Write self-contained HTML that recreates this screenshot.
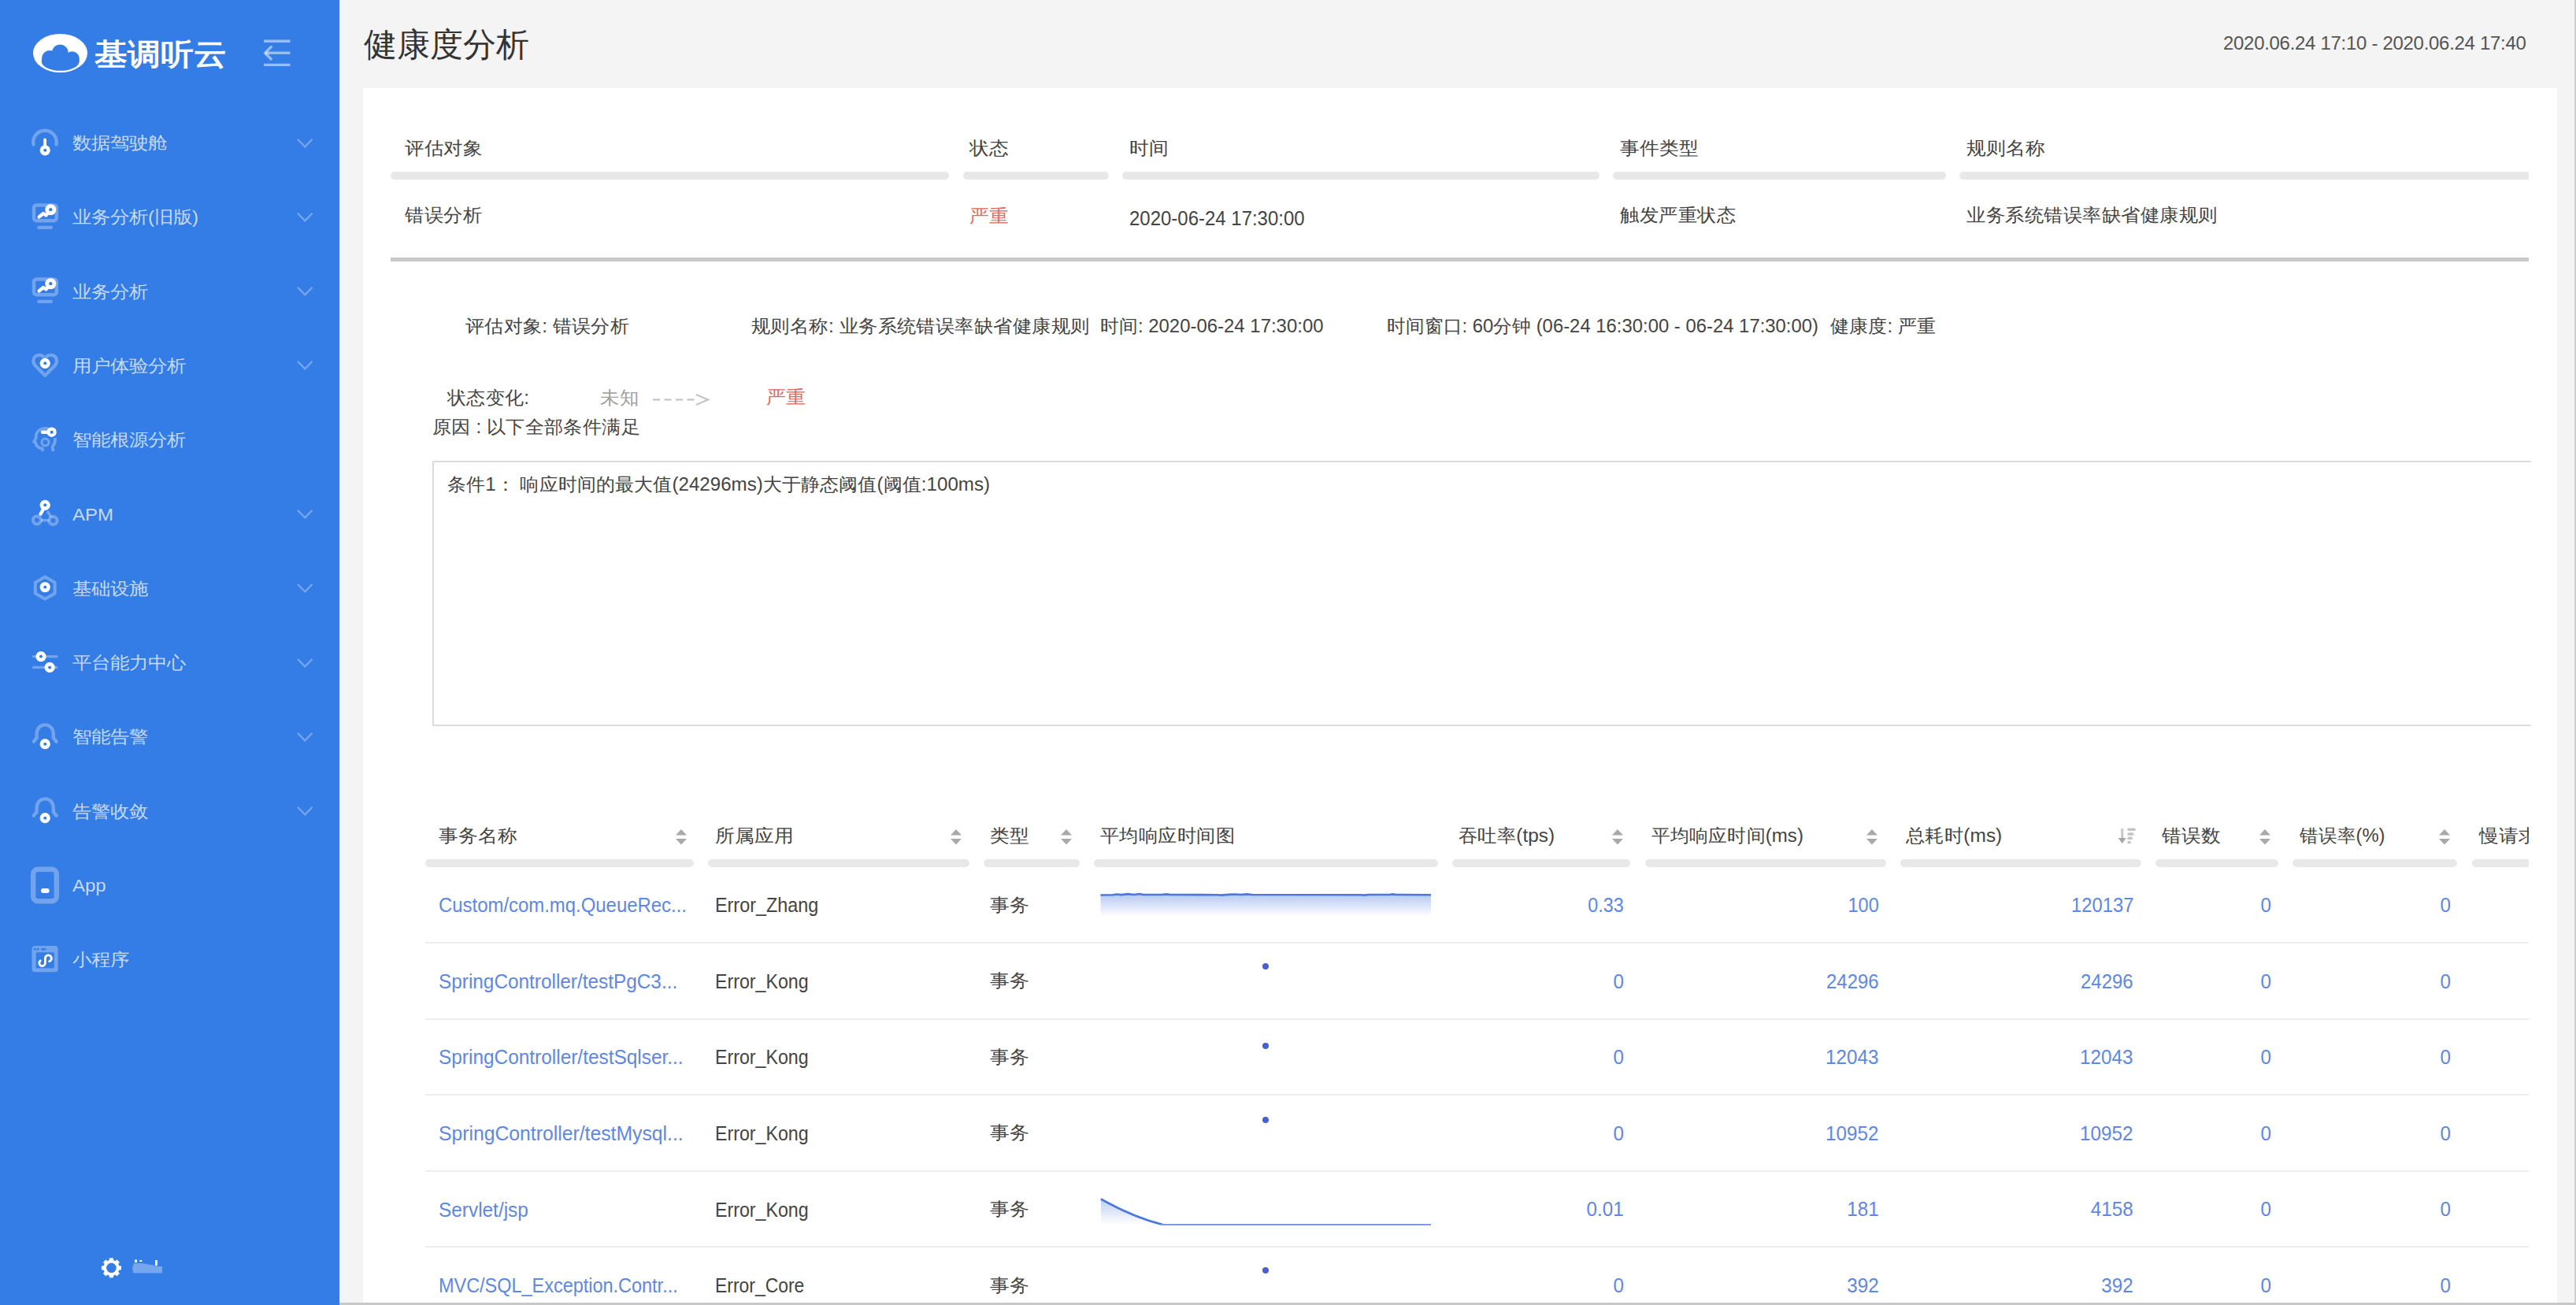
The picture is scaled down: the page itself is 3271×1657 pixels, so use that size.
<!DOCTYPE html><html><head><meta charset="utf-8"><style>
html,body{margin:0;padding:0}
body{width:3271px;height:1657px;overflow:hidden;position:relative;background:#f4f4f4;font-family:"Liberation Sans",sans-serif}
.t{position:absolute;line-height:1;white-space:nowrap}
.sbt{font-size:24px;color:rgba(255,255,255,0.72);transform:scaleY(0.9);transform-origin:0 50%}
</style></head><body>
<div id="sb" style="position:absolute;left:0;top:0;width:431px;height:1657px;background:#347ce6"></div>
<svg style="position:absolute;left:0;top:0" width="431" height="120" viewBox="0 0 431 120">
<ellipse cx="76.5" cy="67.5" rx="34.5" ry="24.5" fill="#fff"/>
<g fill="#347ce6">
<circle cx="76.3" cy="66.8" r="10.4"/>
<circle cx="63" cy="74" r="10"/>
<circle cx="91.5" cy="74.5" r="9.3"/>
<ellipse cx="76.7" cy="78" rx="24" ry="11.8"/>
</g>
<g stroke="rgba(255,255,255,0.5)" stroke-width="3.4" fill="none" stroke-linecap="butt">
<line x1="335" y1="52.2" x2="368.5" y2="52.2"/>
<line x1="337" y1="67.2" x2="368.5" y2="67.2"/>
<line x1="335" y1="82.4" x2="368.5" y2="82.4"/>
<polyline points="344.2,59.6 336.5,67.2 344.2,75" stroke-linecap="round" stroke-linejoin="round"/>
</g>
</svg>
<div class="t" style="left:120px;top:50px;font-size:42px;font-weight:bold;color:#fff;transform:scaleY(0.91);transform-origin:0 0">基调听云</div>
<div class="t sbt" style="left:92px;top:170.0px">数据驾驶舱</div>
<svg style="position:absolute;left:370px;top:169.5px" width="34" height="24"><polyline points="7.9,6.8 17.3,16.4 26.5,6.8" fill="none" stroke="rgba(255,255,255,0.32)" stroke-width="2.3"/></svg>
<div class="t sbt" style="left:92px;top:264.3px">业务分析(旧版)</div>
<svg style="position:absolute;left:370px;top:263.8px" width="34" height="24"><polyline points="7.9,6.8 17.3,16.4 26.5,6.8" fill="none" stroke="rgba(255,255,255,0.32)" stroke-width="2.3"/></svg>
<div class="t sbt" style="left:92px;top:358.6px">业务分析</div>
<svg style="position:absolute;left:370px;top:358.1px" width="34" height="24"><polyline points="7.9,6.8 17.3,16.4 26.5,6.8" fill="none" stroke="rgba(255,255,255,0.32)" stroke-width="2.3"/></svg>
<div class="t sbt" style="left:92px;top:452.9px">用户体验分析</div>
<svg style="position:absolute;left:370px;top:452.4px" width="34" height="24"><polyline points="7.9,6.8 17.3,16.4 26.5,6.8" fill="none" stroke="rgba(255,255,255,0.32)" stroke-width="2.3"/></svg>
<div class="t sbt" style="left:92px;top:547.2px">智能根源分析</div>
<div class="t sbt" style="left:92px;top:641.5px">APM</div>
<svg style="position:absolute;left:370px;top:641.0px" width="34" height="24"><polyline points="7.9,6.8 17.3,16.4 26.5,6.8" fill="none" stroke="rgba(255,255,255,0.32)" stroke-width="2.3"/></svg>
<div class="t sbt" style="left:92px;top:735.8px">基础设施</div>
<svg style="position:absolute;left:370px;top:735.3px" width="34" height="24"><polyline points="7.9,6.8 17.3,16.4 26.5,6.8" fill="none" stroke="rgba(255,255,255,0.32)" stroke-width="2.3"/></svg>
<div class="t sbt" style="left:92px;top:830.1px">平台能力中心</div>
<svg style="position:absolute;left:370px;top:829.6px" width="34" height="24"><polyline points="7.9,6.8 17.3,16.4 26.5,6.8" fill="none" stroke="rgba(255,255,255,0.32)" stroke-width="2.3"/></svg>
<div class="t sbt" style="left:92px;top:924.4px">智能告警</div>
<svg style="position:absolute;left:370px;top:923.9px" width="34" height="24"><polyline points="7.9,6.8 17.3,16.4 26.5,6.8" fill="none" stroke="rgba(255,255,255,0.32)" stroke-width="2.3"/></svg>
<div class="t sbt" style="left:92px;top:1018.7px">告警收敛</div>
<svg style="position:absolute;left:370px;top:1018.2px" width="34" height="24"><polyline points="7.9,6.8 17.3,16.4 26.5,6.8" fill="none" stroke="rgba(255,255,255,0.32)" stroke-width="2.3"/></svg>
<div class="t sbt" style="left:92px;top:1113.0px">App</div>
<div class="t sbt" style="left:92px;top:1207.3px">小程序</div>
<svg style="position:absolute;left:30px;top:156.5px" width="60" height="50" viewBox="0 0 60 50"><path d="M12.5,26.5 A14.8,14.8 0 1 1 41.5,26.5" fill="none" stroke="rgba(255,255,255,0.31)" stroke-width="4.3" stroke-linecap="round"/><rect x="25.2" y="18.5" width="3.8" height="12" rx="1.9" fill="#fff"/><circle cx="27.2" cy="33.8" r="6.6" fill="#fff"/><circle cx="27.2" cy="33.8" r="2.0" fill="#347ce6"/></svg>
<svg style="position:absolute;left:30px;top:250.8px" width="60" height="50" viewBox="0 0 60 50"><rect x="13" y="9.4" width="28.8" height="19.8" rx="3.5" fill="none" stroke="rgba(255,255,255,0.31)" stroke-width="4.5"/><rect x="17.2" y="35.7" width="19.8" height="4.3" rx="2.1" fill="rgba(255,255,255,0.31)"/><polyline points="19.5,24.5 25,20 28.5,22.5 33,17" fill="none" stroke="#fff" stroke-width="4.2" stroke-linecap="round" stroke-linejoin="round"/><circle cx="34.3" cy="15.2" r="7" fill="#fff"/><circle cx="34.3" cy="15.2" r="2.1" fill="#347ce6"/></svg>
<svg style="position:absolute;left:30px;top:345.1px" width="60" height="50" viewBox="0 0 60 50"><rect x="13" y="9.4" width="28.8" height="19.8" rx="3.5" fill="none" stroke="rgba(255,255,255,0.31)" stroke-width="4.5"/><rect x="17.2" y="35.7" width="19.8" height="4.3" rx="2.1" fill="rgba(255,255,255,0.31)"/><polyline points="19.5,24.5 25,20 28.5,22.5 33,17" fill="none" stroke="#fff" stroke-width="4.2" stroke-linecap="round" stroke-linejoin="round"/><circle cx="34.3" cy="15.2" r="7" fill="#fff"/><circle cx="34.3" cy="15.2" r="2.1" fill="#347ce6"/></svg>
<svg style="position:absolute;left:30px;top:439.4px" width="60" height="50" viewBox="0 0 60 50"><path d="M27.2,37.8 L15.5,26 C9.5,19.5 13,11.8 19.8,11.8 C23.5,11.8 25.8,14 27.2,16.2 C28.6,14 30.9,11.8 34.6,11.8 C41.4,11.8 44.9,19.5 38.9,26 Z" fill="none" stroke="rgba(255,255,255,0.31)" stroke-width="4.3" stroke-linejoin="round"/><circle cx="27.2" cy="22.3" r="6.6" fill="#fff"/><circle cx="27.2" cy="22.3" r="2.0" fill="#347ce6"/></svg>
<svg style="position:absolute;left:30px;top:533.7px" width="60" height="50" viewBox="0 0 60 50"><path d="M24,39 L24,35.5 C17,34.5 15.5,31 15.5,28 L13,27 L15.5,22.5 C15.5,14 21,9.8 28,9.8 C33,9.8 37,12 39.5,15.5 M39.8,22 C40.5,27 38.5,31 36.5,33 L37.5,39" fill="none" stroke="rgba(255,255,255,0.31)" stroke-width="3.8" stroke-linejoin="round"/><circle cx="27.5" cy="27.5" r="4.5" fill="none" stroke="rgba(255,255,255,0.31)" stroke-width="3.2"/><line x1="24" y1="14.7" x2="34" y2="14.7" stroke="#fff" stroke-width="4.4" stroke-linecap="round"/><circle cx="35.6" cy="14.7" r="6.2" fill="#fff"/><circle cx="35.6" cy="14.7" r="2.0" fill="#347ce6"/></svg>
<svg style="position:absolute;left:30px;top:628.0px" width="60" height="50" viewBox="0 0 60 50"><circle cx="16.9" cy="32.5" r="5" fill="none" stroke="rgba(255,255,255,0.31)" stroke-width="4"/><circle cx="37.5" cy="33" r="5" fill="none" stroke="rgba(255,255,255,0.31)" stroke-width="4"/><line x1="22" y1="32.7" x2="32.5" y2="32.8" stroke="rgba(255,255,255,0.31)" stroke-width="3.5"/><line x1="30" y1="21" x2="35" y2="28.5" stroke="rgba(255,255,255,0.31)" stroke-width="3.5"/><line x1="27" y1="15" x2="21.6" y2="24.5" stroke="#fff" stroke-width="4.4" stroke-linecap="round"/><circle cx="27.2" cy="13.3" r="6.6" fill="#fff"/><circle cx="27.2" cy="13.3" r="2.0" fill="#347ce6"/></svg>
<svg style="position:absolute;left:30px;top:722.3px" width="60" height="50" viewBox="0 0 60 50"><polygon points="27.2,10.5 39.6,17.5 39.6,31.5 27.2,38.5 14.8,31.5 14.8,17.5" fill="none" stroke="rgba(255,255,255,0.31)" stroke-width="4" stroke-linejoin="round"/><circle cx="27.2" cy="23.5" r="6.6" fill="#fff"/><circle cx="27.2" cy="23.5" r="2.0" fill="#347ce6"/></svg>
<svg style="position:absolute;left:30px;top:816.6px" width="60" height="50" viewBox="0 0 60 50"><line x1="12.5" y1="16.6" x2="42" y2="16.6" stroke="rgba(255,255,255,0.31)" stroke-width="3.4" stroke-linecap="round"/><line x1="12.5" y1="30.4" x2="42" y2="30.4" stroke="rgba(255,255,255,0.31)" stroke-width="3.4" stroke-linecap="round"/><circle cx="22" cy="16.6" r="6.6" fill="#fff"/><circle cx="22" cy="16.6" r="2.0" fill="#347ce6"/><circle cx="33.1" cy="30.4" r="6.6" fill="#fff"/><circle cx="33.1" cy="30.4" r="2.0" fill="#347ce6"/></svg>
<svg style="position:absolute;left:30px;top:910.9px" width="60" height="50" viewBox="0 0 60 50"><path d="M12.8,30.6 L16.6,25.8 L16.6,21 C16.6,13.6 21.4,9.4 27.2,9.4 C33,9.4 37.8,13.6 37.8,21 L37.8,25.8 L41.6,30.6" fill="none" stroke="rgba(255,255,255,0.31)" stroke-width="4.4" stroke-linecap="round" stroke-linejoin="round"/><circle cx="27.2" cy="33.7" r="6.6" fill="#fff"/><circle cx="27.2" cy="33.7" r="2.0" fill="#347ce6"/></svg>
<svg style="position:absolute;left:30px;top:1005.2px" width="60" height="50" viewBox="0 0 60 50"><path d="M12.8,30.6 L16.6,25.8 L16.6,21 C16.6,13.6 21.4,9.4 27.2,9.4 C33,9.4 37.8,13.6 37.8,21 L37.8,25.8 L41.6,30.6" fill="none" stroke="rgba(255,255,255,0.31)" stroke-width="4.4" stroke-linecap="round" stroke-linejoin="round"/><circle cx="27.2" cy="33.7" r="6.6" fill="#fff"/><circle cx="27.2" cy="33.7" r="2.0" fill="#347ce6"/></svg>
<svg style="position:absolute;left:30px;top:1099.5px" width="60" height="50" viewBox="0 0 60 50"><rect x="12.15" y="3.75" width="29.7" height="40.4" rx="6" fill="none" stroke="rgba(255,255,255,0.31)" stroke-width="6.5"/><rect x="22" y="27.9" width="10.7" height="6" rx="3" fill="#fff"/></svg>
<svg style="position:absolute;left:30px;top:1193.8px" width="60" height="50" viewBox="0 0 60 50"><rect x="10.5" y="6.9" width="33.1" height="33.3" rx="4" fill="rgba(255,255,255,0.31)"/><rect x="15.7" y="15.3" width="23.1" height="20" fill="#347ce6"/><circle cx="14.4" cy="11.2" r="1.4" fill="#347ce6"/><circle cx="18.1" cy="11.2" r="1.4" fill="#347ce6"/><rect x="22.2" y="10" width="6.2" height="2.4" rx="1.2" fill="#347ce6"/><path d="M32.6,26.6 A4,4 0 1 0 27.4,23.3 L27.4,28.8 A3.8,3.8 0 1 1 21.2,25.8" fill="none" stroke="#fff" stroke-width="2.8" stroke-linecap="round"/></svg>
<svg style="position:absolute;left:0;top:0;overflow:visible" width="431" height="1657"><polygon points="139.03,1600.39 139.26,1597.79 143.54,1597.79 143.77,1600.39 146.45,1601.50 148.45,1599.82 151.48,1602.85 149.80,1604.85 150.91,1607.53 153.51,1607.76 153.51,1612.04 150.91,1612.27 149.80,1614.95 151.48,1616.95 148.45,1619.98 146.45,1618.30 143.77,1619.41 143.54,1622.01 139.26,1622.01 139.03,1619.41 136.35,1618.30 134.35,1619.98 131.32,1616.95 133.00,1614.95 131.89,1612.27 129.29,1612.04 129.29,1607.76 131.89,1607.53 133.00,1604.85 131.32,1602.85 134.35,1599.82 136.35,1601.50" fill="#fff" stroke="#fff" stroke-width="0.8" stroke-linejoin="round"/><circle cx="141.4" cy="1609.9" r="6.3" fill="#347ce6"/><polygon points="168,1610 170,1604 180,1604 192,1606 200,1608 206,1608 206,1616.5 169,1616.5" fill="rgba(255,255,255,0.32)"/><rect x="171" y="1599.5" width="3" height="3.5" fill="#fff"/><rect x="177" y="1600" width="3.5" height="2" rx="1" fill="#fff"/><rect x="197" y="1600" width="2.8" height="7" fill="#fff"/></svg>
<div style="position:absolute;left:461px;top:112px;width:2786px;height:1545px;background:#fff"></div>
<div class="t" style="left:462px;top:36px;font-size:42px;color:#333;">健康度分析</div>
<div class="t" style="left:2823px;top:43px;font-size:24px;color:#555;letter-spacing:-0.3px">2020.06.24 17:10 - 2020.06.24 17:40</div>
<div class="t" style="left:514px;top:176px;font-size:25px;color:#444;transform:scale(0.9879,0.93);transform-origin:0 50%;">评估对象</div>
<div class="t" style="left:1231px;top:176px;font-size:25px;color:#444;transform:scale(1.0,0.93);transform-origin:0 50%;">状态</div>
<div class="t" style="left:1434px;top:176px;font-size:25px;color:#444;transform:scale(1.0,0.93);transform-origin:0 50%;">时间</div>
<div class="t" style="left:2057px;top:176px;font-size:25px;color:#444;transform:scale(1.0,0.93);transform-origin:0 50%;">事件类型</div>
<div class="t" style="left:2497px;top:176px;font-size:25px;color:#444;transform:scale(1.0,0.93);transform-origin:0 50%;">规则名称</div>
<div style="position:absolute;left:496px;top:217.5px;width:709px;height:10.5px;background:#e8e8e8;border-radius:5.25px"></div>
<div style="position:absolute;left:1223px;top:217.5px;width:185px;height:10.5px;background:#e8e8e8;border-radius:5.25px"></div>
<div style="position:absolute;left:1425px;top:217.5px;width:606px;height:10.5px;background:#e8e8e8;border-radius:5.25px"></div>
<div style="position:absolute;left:2048px;top:217.5px;width:423px;height:10.5px;background:#e8e8e8;border-radius:5.25px"></div>
<div style="position:absolute;left:2488px;top:217.5px;width:723px;height:10.5px;background:#e8e8e8;border-radius:5px 0 0 5px"></div>
<div class="t" style="left:514px;top:261px;font-size:25px;color:#444;transform:scale(0.9818,0.93);transform-origin:0 50%;">错误分析</div>
<div class="t" style="left:1231px;top:262px;font-size:25px;color:#e06a5e;transform:scale(1.0,0.93);transform-origin:0 50%;">严重</div>
<div class="t" style="left:1434px;top:264px;font-size:26px;color:#444;transform:scale(0.9221,1.0);transform-origin:0 50%;">2020-06-24 17:30:00</div>
<div class="t" style="left:2057px;top:261px;font-size:25px;color:#444;transform:scale(0.9819,0.93);transform-origin:0 50%;">触发严重状态</div>
<div class="t" style="left:2497px;top:261px;font-size:25px;color:#444;transform:scale(0.9815,0.93);transform-origin:0 50%;">业务系统错误率缺省健康规则</div>
<div style="position:absolute;left:496px;top:326.5px;width:2715px;height:5px;background:#c8c8c8"></div>
<div class="t" style="left:591px;top:402px;font-size:25px;color:#444;transform:scale(0.9718,0.93);transform-origin:0 50%;">评估对象: 错误分析</div>
<div class="t" style="left:954px;top:402px;font-size:25px;color:#444;transform:scale(0.9794,0.93);transform-origin:0 50%;">规则名称: 业务系统错误率缺省健康规则</div>
<div class="t" style="left:1397px;top:402px;font-size:25px;color:#444;transform:scale(0.9578,0.93);transform-origin:0 50%;">时间: 2020-06-24 17:30:00</div>
<div class="t" style="left:1761px;top:402px;font-size:25px;color:#444;transform:scale(0.9548,0.93);transform-origin:0 50%;">时间窗口: 60分钟 (06-24 16:30:00 - 06-24 17:30:00)</div>
<div class="t" style="left:2324px;top:402px;font-size:25px;color:#444;transform:scale(0.968,0.93);transform-origin:0 50%;">健康度: 严重</div>
<div class="t" style="left:568px;top:492.5px;font-size:25px;color:#444;transform:scale(0.9721,0.93);transform-origin:0 50%;">状态变化:</div>
<div class="t" style="left:762px;top:492.5px;font-size:25px;color:#a0a0a0;transform:scale(0.9837,0.93);transform-origin:0 50%;">未知</div>
<svg style="position:absolute;left:826px;top:498px" width="80" height="20"><g stroke="#c4c4c4" stroke-width="2.2" fill="none"><line x1="3" y1="9.5" x2="12" y2="9.5"/><line x1="17.5" y1="9.5" x2="26.5" y2="9.5"/><line x1="32" y1="9.5" x2="41" y2="9.5"/><line x1="46.5" y1="9.5" x2="55.5" y2="9.5"/><polyline points="58,3 73,9.5 58,16"/></g></svg>
<div class="t" style="left:973px;top:492px;font-size:25px;color:#e06a5e;transform:scale(1.0082,0.93);transform-origin:0 50%;">严重</div>
<div class="t" style="left:549px;top:530px;font-size:25px;color:#444;transform:scale(0.9743,0.93);transform-origin:0 50%;">原因 : 以下全部条件满足</div>
<div style="position:absolute;left:549px;top:585px;width:2663px;height:333px;border:2px solid #dcdcdc;border-right:none"></div>
<div class="t" style="left:568px;top:603px;font-size:25px;color:#444;transform:scale(0.965,0.93);transform-origin:0 50%;">条件1： 响应时间的最大值(24296ms)大于静态阈值(阈值:100ms)</div>
<div style="position:absolute;left:0;top:0;width:3211px;height:1657px;overflow:hidden">
<div class="t" style="left:557px;top:1049px;font-size:25px;color:#444;transform:scale(1,0.93);transform-origin:0 50%;">事务名称</div>
<div class="t" style="left:908px;top:1049px;font-size:25px;color:#444;transform:scale(1,0.93);transform-origin:0 50%;">所属应用</div>
<div class="t" style="left:1257px;top:1049px;font-size:25px;color:#444;transform:scale(1,0.93);transform-origin:0 50%;">类型</div>
<div class="t" style="left:1397px;top:1049px;font-size:25px;color:#444;transform:scale(0.9787,0.93);transform-origin:0 50%;">平均响应时间图</div>
<div class="t" style="left:1852px;top:1049px;font-size:25px;color:#444;transform:scale(0.9774,0.93);transform-origin:0 50%;">吞吐率(tps)</div>
<div class="t" style="left:2097px;top:1049px;font-size:25px;color:#444;transform:scale(0.9649,0.93);transform-origin:0 50%;">平均响应时间(ms)</div>
<div class="t" style="left:2420px;top:1049px;font-size:25px;color:#444;transform:scale(0.9783,0.93);transform-origin:0 50%;">总耗时(ms)</div>
<div class="t" style="left:2745px;top:1049px;font-size:25px;color:#444;transform:scale(0.9973,0.93);transform-origin:0 50%;">错误数</div>
<div class="t" style="left:2920px;top:1049px;font-size:25px;color:#444;transform:scale(0.9531,0.93);transform-origin:0 50%;">错误率(%)</div>
<div class="t" style="left:3148px;top:1049px;font-size:25px;color:#444;transform:scale(1,0.93);transform-origin:0 50%;">慢请求</div>
<div style="position:absolute;left:540px;top:1091px;width:341px;height:10px;background:#e8e8e8;border-radius:5.0px"></div>
<div style="position:absolute;left:899px;top:1091px;width:332px;height:10px;background:#e8e8e8;border-radius:5.0px"></div>
<div style="position:absolute;left:1249px;top:1091px;width:122px;height:10px;background:#e8e8e8;border-radius:5.0px"></div>
<div style="position:absolute;left:1389px;top:1091px;width:437px;height:10px;background:#e8e8e8;border-radius:5.0px"></div>
<div style="position:absolute;left:1844px;top:1091px;width:226px;height:10px;background:#e8e8e8;border-radius:5.0px"></div>
<div style="position:absolute;left:2089px;top:1091px;width:306px;height:10px;background:#e8e8e8;border-radius:5.0px"></div>
<div style="position:absolute;left:2413px;top:1091px;width:306px;height:10px;background:#e8e8e8;border-radius:5.0px"></div>
<div style="position:absolute;left:2737px;top:1091px;width:156px;height:10px;background:#e8e8e8;border-radius:5.0px"></div>
<div style="position:absolute;left:2911px;top:1091px;width:209px;height:10px;background:#e8e8e8;border-radius:5.0px"></div>
<div style="position:absolute;left:3139px;top:1091px;width:100px;height:10px;background:#e8e8e8;border-radius:5px"></div>
</div>
<svg style="position:absolute;left:856.5px;top:1052px" width="16" height="22"><polygon points="8,1 15,8.5 1,8.5" fill="#a9a9a9"/><polygon points="1,13 15,13 8,20.5" fill="#a9a9a9"/></svg>
<svg style="position:absolute;left:1206px;top:1052px" width="16" height="22"><polygon points="8,1 15,8.5 1,8.5" fill="#a9a9a9"/><polygon points="1,13 15,13 8,20.5" fill="#a9a9a9"/></svg>
<svg style="position:absolute;left:1346px;top:1052px" width="16" height="22"><polygon points="8,1 15,8.5 1,8.5" fill="#a9a9a9"/><polygon points="1,13 15,13 8,20.5" fill="#a9a9a9"/></svg>
<svg style="position:absolute;left:2045.5px;top:1052px" width="16" height="22"><polygon points="8,1 15,8.5 1,8.5" fill="#a9a9a9"/><polygon points="1,13 15,13 8,20.5" fill="#a9a9a9"/></svg>
<svg style="position:absolute;left:2369px;top:1052px" width="16" height="22"><polygon points="8,1 15,8.5 1,8.5" fill="#a9a9a9"/><polygon points="1,13 15,13 8,20.5" fill="#a9a9a9"/></svg>
<svg style="position:absolute;left:2867.5px;top:1052px" width="16" height="22"><polygon points="8,1 15,8.5 1,8.5" fill="#a9a9a9"/><polygon points="1,13 15,13 8,20.5" fill="#a9a9a9"/></svg>
<svg style="position:absolute;left:3095.5px;top:1052px" width="16" height="22"><polygon points="8,1 15,8.5 1,8.5" fill="#a9a9a9"/><polygon points="1,13 15,13 8,20.5" fill="#a9a9a9"/></svg>
<svg style="position:absolute;left:2680px;top:1045px" width="40" height="35"><line x1="14.75" y1="7" x2="14.75" y2="21" stroke="#c6c6c6" stroke-width="3"/><polygon points="9.8,19 19.7,19 14.75,26" fill="#a6a6a6"/><g fill="#c4c4c4"><rect x="21.3" y="6.6" width="10.5" height="3.4" rx="1.7"/><rect x="21.3" y="12.3" width="8.4" height="3.4" rx="1.7"/><rect x="21.3" y="17.5" width="6.8" height="3.4" rx="1.7"/><rect x="21.3" y="22.8" width="4.6" height="3.4" rx="1.7"/></g></svg>
<div class="t" style="left:557px;top:1136.1px;font-size:26px;color:#5d88e4;transform:scale(0.9196,1.0);transform-origin:0 50%;">Custom/com.mq.QueueRec...</div>
<div class="t" style="left:908px;top:1136.1px;font-size:26px;color:#444;transform:scale(0.8988,1.0);transform-origin:0 50%;">Error_Zhang</div>
<div class="t" style="left:1257px;top:1136.5px;font-size:25px;color:#444;transform:scale(1.0,0.93);transform-origin:0 50%;">事务</div>
<div class="t" style="right:1209px;top:1137.0px;font-size:25px;color:#5d88e4;transform:scaleX(0.9356);transform-origin:100% 0;">0.33</div>
<div class="t" style="right:885px;top:1137.0px;font-size:25px;color:#5d88e4;transform:scaleX(0.9406);transform-origin:100% 0;">100</div>
<div class="t" style="right:562px;top:1137.0px;font-size:25px;color:#5d88e4;transform:scaleX(0.9522);transform-origin:100% 0;">120137</div>
<div class="t" style="right:387px;top:1137.0px;font-size:25px;color:#5d88e4;transform:scaleX(0.97);transform-origin:100% 0;">0</div>
<div class="t" style="right:159px;top:1137.0px;font-size:25px;color:#5d88e4;transform:scaleX(0.97);transform-origin:100% 0;">0</div>
<div style="position:absolute;left:540px;top:1196.0px;width:2671px;height:2px;background:#eeeeee"></div>
<div class="t" style="left:557px;top:1232.7px;font-size:26px;color:#5d88e4;transform:scale(0.9367,1.0);transform-origin:0 50%;">SpringController/testPgC3...</div>
<div class="t" style="left:908px;top:1232.7px;font-size:26px;color:#444;transform:scale(0.8926,1.0);transform-origin:0 50%;">Error_Kong</div>
<div class="t" style="left:1257px;top:1233.1px;font-size:25px;color:#444;transform:scale(1.0,0.93);transform-origin:0 50%;">事务</div>
<div class="t" style="right:1209px;top:1233.6px;font-size:25px;color:#5d88e4;transform:scaleX(0.97);transform-origin:100% 0;">0</div>
<div class="t" style="right:885px;top:1233.6px;font-size:25px;color:#5d88e4;transform:scaleX(0.9558);transform-origin:100% 0;">24296</div>
<div class="t" style="right:562px;top:1233.6px;font-size:25px;color:#5d88e4;transform:scaleX(0.9558);transform-origin:100% 0;">24296</div>
<div class="t" style="right:387px;top:1233.6px;font-size:25px;color:#5d88e4;transform:scaleX(0.97);transform-origin:100% 0;">0</div>
<div class="t" style="right:159px;top:1233.6px;font-size:25px;color:#5d88e4;transform:scaleX(0.97);transform-origin:100% 0;">0</div>
<div style="position:absolute;left:540px;top:1292.6px;width:2671px;height:2px;background:#eeeeee"></div>
<div style="position:absolute;left:1603px;top:1222.5px;width:8px;height:8px;border-radius:4px;background:#4a5fd0"></div>
<div class="t" style="left:557px;top:1329.3px;font-size:26px;color:#5d88e4;transform:scale(0.9387,1.0);transform-origin:0 50%;">SpringController/testSqlser...</div>
<div class="t" style="left:908px;top:1329.3px;font-size:26px;color:#444;transform:scale(0.8926,1.0);transform-origin:0 50%;">Error_Kong</div>
<div class="t" style="left:1257px;top:1329.7px;font-size:25px;color:#444;transform:scale(1.0,0.93);transform-origin:0 50%;">事务</div>
<div class="t" style="right:1209px;top:1330.2px;font-size:25px;color:#5d88e4;transform:scaleX(0.97);transform-origin:100% 0;">0</div>
<div class="t" style="right:885px;top:1330.2px;font-size:25px;color:#5d88e4;transform:scaleX(0.97);transform-origin:100% 0;">12043</div>
<div class="t" style="right:562px;top:1330.2px;font-size:25px;color:#5d88e4;transform:scaleX(0.97);transform-origin:100% 0;">12043</div>
<div class="t" style="right:387px;top:1330.2px;font-size:25px;color:#5d88e4;transform:scaleX(0.97);transform-origin:100% 0;">0</div>
<div class="t" style="right:159px;top:1330.2px;font-size:25px;color:#5d88e4;transform:scaleX(0.97);transform-origin:100% 0;">0</div>
<div style="position:absolute;left:540px;top:1389.2px;width:2671px;height:2px;background:#eeeeee"></div>
<div style="position:absolute;left:1603px;top:1323.7px;width:8px;height:8px;border-radius:4px;background:#4a5fd0"></div>
<div class="t" style="left:557px;top:1425.9px;font-size:26px;color:#5d88e4;transform:scale(0.9513,1.0);transform-origin:0 50%;">SpringController/testMysql...</div>
<div class="t" style="left:908px;top:1425.9px;font-size:26px;color:#444;transform:scale(0.8926,1.0);transform-origin:0 50%;">Error_Kong</div>
<div class="t" style="left:1257px;top:1426.3px;font-size:25px;color:#444;transform:scale(1.0,0.93);transform-origin:0 50%;">事务</div>
<div class="t" style="right:1209px;top:1426.8px;font-size:25px;color:#5d88e4;transform:scaleX(0.97);transform-origin:100% 0;">0</div>
<div class="t" style="right:885px;top:1426.8px;font-size:25px;color:#5d88e4;transform:scaleX(0.97);transform-origin:100% 0;">10952</div>
<div class="t" style="right:562px;top:1426.8px;font-size:25px;color:#5d88e4;transform:scaleX(0.97);transform-origin:100% 0;">10952</div>
<div class="t" style="right:387px;top:1426.8px;font-size:25px;color:#5d88e4;transform:scaleX(0.97);transform-origin:100% 0;">0</div>
<div class="t" style="right:159px;top:1426.8px;font-size:25px;color:#5d88e4;transform:scaleX(0.97);transform-origin:100% 0;">0</div>
<div style="position:absolute;left:540px;top:1485.8px;width:2671px;height:2px;background:#eeeeee"></div>
<div style="position:absolute;left:1603px;top:1418.0px;width:8px;height:8px;border-radius:4px;background:#4a5fd0"></div>
<div class="t" style="left:557px;top:1522.5px;font-size:26px;color:#5d88e4;transform:scale(0.9378,1.0);transform-origin:0 50%;">Servlet/jsp</div>
<div class="t" style="left:908px;top:1522.5px;font-size:26px;color:#444;transform:scale(0.8926,1.0);transform-origin:0 50%;">Error_Kong</div>
<div class="t" style="left:1257px;top:1522.9px;font-size:25px;color:#444;transform:scale(1.0,0.93);transform-origin:0 50%;">事务</div>
<div class="t" style="right:1209px;top:1523.4px;font-size:25px;color:#5d88e4;transform:scaleX(0.97);transform-origin:100% 0;">0.01</div>
<div class="t" style="right:885px;top:1523.4px;font-size:25px;color:#5d88e4;transform:scaleX(0.97);transform-origin:100% 0;">181</div>
<div class="t" style="right:562px;top:1523.4px;font-size:25px;color:#5d88e4;transform:scaleX(0.97);transform-origin:100% 0;">4158</div>
<div class="t" style="right:387px;top:1523.4px;font-size:25px;color:#5d88e4;transform:scaleX(0.97);transform-origin:100% 0;">0</div>
<div class="t" style="right:159px;top:1523.4px;font-size:25px;color:#5d88e4;transform:scaleX(0.97);transform-origin:100% 0;">0</div>
<div style="position:absolute;left:540px;top:1582.4px;width:2671px;height:2px;background:#eeeeee"></div>
<div class="t" style="left:557px;top:1619.1px;font-size:26px;color:#5d88e4;transform:scale(0.9019,1.0);transform-origin:0 50%;">MVC/SQL_Exception.Contr...</div>
<div class="t" style="left:908px;top:1619.1px;font-size:26px;color:#444;transform:scale(0.8809,1.0);transform-origin:0 50%;">Error_Core</div>
<div class="t" style="left:1257px;top:1619.5px;font-size:25px;color:#444;transform:scale(1.0,0.93);transform-origin:0 50%;">事务</div>
<div class="t" style="right:1209px;top:1620.0px;font-size:25px;color:#5d88e4;transform:scaleX(0.97);transform-origin:100% 0;">0</div>
<div class="t" style="right:885px;top:1620.0px;font-size:25px;color:#5d88e4;transform:scaleX(0.97);transform-origin:100% 0;">392</div>
<div class="t" style="right:562px;top:1620.0px;font-size:25px;color:#5d88e4;transform:scaleX(0.97);transform-origin:100% 0;">392</div>
<div class="t" style="right:387px;top:1620.0px;font-size:25px;color:#5d88e4;transform:scaleX(0.97);transform-origin:100% 0;">0</div>
<div class="t" style="right:159px;top:1620.0px;font-size:25px;color:#5d88e4;transform:scaleX(0.97);transform-origin:100% 0;">0</div>
<div style="position:absolute;left:1603px;top:1608.8px;width:8px;height:8px;border-radius:4px;background:#4a5fd0"></div>
<svg style="position:absolute;left:1390px;top:1125px" width="440" height="45" viewBox="1390 1125 440 45">
<defs><linearGradient id="g1" x1="0" y1="0" x2="0" y2="1"><stop offset="0" stop-color="#5b84e0" stop-opacity="0.45"/><stop offset="1" stop-color="#5b84e0" stop-opacity="0"/></linearGradient></defs>
<path d="M1397.5,1136.48 L1413,1136.18 L1418,1135.52 L1424,1136.12 L1432,1135.16 L1440,1136.00 L1447,1134.98 L1452,1136.00 L1475,1135.94 L1481,1135.40 L1486,1136.00 L1545,1136.18 L1551,1136.60 L1560,1135.88 L1568,1135.52 L1575,1135.94 L1583,1135.34 L1590,1136.00 L1728,1136.18 L1733,1136.60 L1738,1136.00 L1765,1135.94 L1768,1135.40 L1773,1136.00 L1817,1136.30 L1817,1164 L1397.5,1164 Z" fill="url(#g1)"/>
<polyline points="1397.5,1136.48 1413,1136.18 1418,1135.52 1424,1136.12 1432,1135.16 1440,1136.00 1447,1134.98 1452,1136.00 1475,1135.94 1481,1135.40 1486,1136.00 1545,1136.18 1551,1136.60 1560,1135.88 1568,1135.52 1575,1135.94 1583,1135.34 1590,1136.00 1728,1136.18 1733,1136.60 1738,1136.00 1765,1135.94 1768,1135.40 1773,1136.00 1817,1136.30" fill="none" stroke="#4a78dc" stroke-width="2.6"/>
</svg>
<svg style="position:absolute;left:1390px;top:1512px" width="440" height="50" viewBox="1390 1512 440 50">
<defs><linearGradient id="g2" x1="0" y1="0" x2="0" y2="1"><stop offset="0" stop-color="#5b84e0" stop-opacity="0.4"/><stop offset="1" stop-color="#5b84e0" stop-opacity="0"/></linearGradient></defs>
<path d="M1398,1522.5 Q1440,1546 1476,1554.8 L1398,1554.8 Z" fill="url(#g2)"/>
<path d="M1398,1522.5 Q1440,1546 1476,1554.8" fill="none" stroke="#4a78dc" stroke-width="2.7"/>
<line x1="1474" y1="1555" x2="1817" y2="1555" stroke="#7c9be6" stroke-width="2.2"/>
</svg>
<div style="position:absolute;left:3269px;top:0;width:2px;height:1657px;background:#d0d0d0"></div>
<div style="position:absolute;left:431px;top:1654px;width:2840px;height:3px;background:#c8c8c8"></div>
</body></html>
